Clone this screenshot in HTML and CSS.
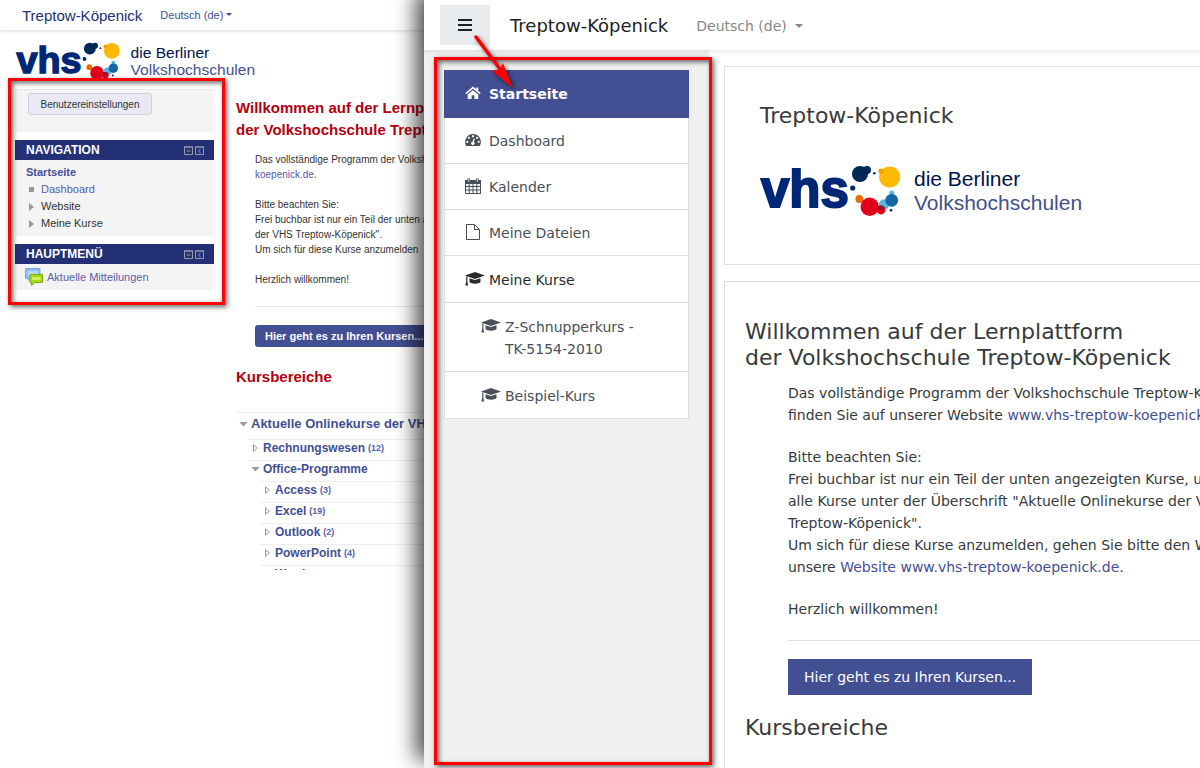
FILE: index.html
```html
<!DOCTYPE html>
<html lang="de">
<head>
    <meta charset="UTF-8">
    <meta name="viewport" content="width=device-width, initial-scale=1.0">
    <title>Treptow-Köpenick</title>
    <link rel="stylesheet" href="styles.css">
</head>
<body>
    <svg class="defs" width="0" height="0" aria-hidden="true">
        <symbol id="bubbles" viewBox="0 0 54 54">
            <g fill="#002855">
                <circle cx="10" cy="9" r="8"/>
                <circle cx="17" cy="5" r="4"/>
                <circle cx="24.3" cy="8.3" r="1.3"/>
                <circle cx="2.7" cy="23" r="2.6"/>
                <circle cx="41" cy="45.3" r="1.3"/>
            </g>
            <circle cx="39.7" cy="12" r="10.6" fill="#fdb900"/>
            <circle cx="31" cy="6" r="2.6" fill="#f0a000"/>
            <circle cx="9.3" cy="34" r="3.9" fill="#ee6a00"/>
            <circle cx="41.7" cy="27.9" r="2.5" fill="#5ab4e5"/>
            <circle cx="34" cy="39.5" r="5.2" fill="#5ab4e5"/>
            <circle cx="41.7" cy="35.3" r="6.4" fill="#1467a5"/>
            <circle cx="19.7" cy="41.7" r="9.2" fill="#e2001a"/>
            <circle cx="31" cy="45" r="4.4" fill="#e2001a"/>
            <path d="M27 42a5 5 0 0 1 8 1a5 5 0 0 1-6 1z" fill="#8c1730"/>
        </symbol>
        <symbol id="cap" viewBox="0 0 20 16">
            <path d="M10 1L0 4.500L10 8L20 4.500Z M4.500 7.200V11C6 13.300 14 13.300 15.500 11V7.200L10 9.100Z M1.200 5.500h1.200v5l.8 4H.4l.8-4z"/>
        </symbol>
        <symbol id="min" viewBox="0 0 9 9">
            <path d="M.5 1h8v7.500h-8zM0 1h9M2.500 5h4" fill="none" stroke="#99a"/>
        </symbol>
        <symbol id="dock" viewBox="0 0 9 9">
            <path d="M.5 1h8v7.500h-8zM0 1h9M5.500 3L3.500 5l2 2" fill="none" stroke="#99a"/>
        </symbol>
    </svg>

    <div class="windows">
        <div class="old">
            <header class="old-header">
                <a href="#" class="old-brand">Treptow-Köpenick</a>
                <a href="#" class="old-lang">Deutsch (de)<span class="caret"></span></a>
            </header>
            <div class="old-logo">
                <svg viewBox="0 0 326 54">
                    <text class="logo-vhs" x="1" y="42">vhs</text>
                    <use href="#bubbles" x="90" width="54" height="54"/>
                    <text class="logo-die" x="155" y="21">die Berliner</text>
                    <text class="logo-volk" x="155" y="45">Volkshochschulen</text>
                </svg>
            </div>
            <div class="old-body">
                <aside class="old-side">
                    <div class="block block-settings">
                        <button type="button">Benutzereinstellungen</button>
                    </div>
                    <div class="block">
                        <h2>NAVIGATION <span><svg><use href="#min"/></svg><svg><use href="#dock"/></svg></span></h2>
                        <ul class="old-nav">
                            <li><a href="#" class="current">Startseite</a></li>
                            <li class="square"><a href="#">Dashboard</a></li>
                            <li class="arrow">Website</li>
                            <li class="arrow">Meine Kurse</li>
                        </ul>
                    </div>
                    <div class="block">
                        <h2>HAUPTMENÜ <span><svg><use href="#min"/></svg><svg><use href="#dock"/></svg></span></h2>
                        <a href="#" class="news">
                            <svg viewBox="0 0 18 18">
                                <path d="M1 .5h14v10H5.500V14L2.500 10.500H.5V1z" fill="#8fc0f3" stroke="#6ea6e4"/>
                                <path d="M3 3h10v5H3z" fill="#b8d8fa"/>
                                <path d="M5 6.500h12.500v8H10L6.500 17.500v-3H5z" fill="#a4d822" stroke="#78b000"/>
                                <path d="M7 9h8.500v3H7z" fill="#cdf05a"/>
                            </svg>
                            Aktuelle Mitteilungen
                        </a>
                    </div>
                    <div class="frame frame-old"></div>
                </aside>

                <main class="old-main">
                    <h2>Willkommen auf der Lernplattform<br>der Volkshochschule Treptow-Köpenick</h2>
                    <div class="old-text">
                        <p>Das vollständige Programm der Volkshochschule<br><a href="#">koepenick.de</a>.</p>
                        <p>Bitte beachten Sie:<br>Frei buchbar ist nur ein Teil der unten angezeigten<br>der VHS Treptow-Köpenick".<br>Um sich für diese Kurse anzumelden</p>
                        <p>Herzlich willkommen!</p>
                        <hr>
                        <a href="#" class="old-btn">Hier geht es zu Ihren Kursen...</a>
                    </div>
                    <h2>Kursbereiche</h2>
                    <ul class="tree">
                        <li class="level1 open"><a href="#">Aktuelle Onlinekurse der VHS</a></li>
                        <li class="level2"><a href="#">Rechnungswesen</a> <small>(12)</small></li>
                        <li class="level2 open"><a href="#">Office-Programme</a></li>
                        <li class="level3"><a href="#">Access</a> <small>(3)</small></li>
                        <li class="level3"><a href="#">Excel</a> <small>(19)</small></li>
                        <li class="level3"><a href="#">Outlook</a> <small>(2)</small></li>
                        <li class="level3"><a href="#">PowerPoint</a> <small>(4)</small></li>
                        <li class="level3"><a href="#">Word</a></li>
                    </ul>
                </main>
            </div>
        </div>

        <div class="new">
            <header class="navbar">
                <button type="button" class="toggle" aria-label="Menü">
                    <svg viewBox="0 0 14 12"><path d="M0 1h14M0 6h14M0 11h14" stroke="#1d2125" stroke-width="2"/></svg>
                </button>
                <a href="#" class="brand">Treptow-Köpenick</a>
                <a href="#" class="lang">Deutsch (de)<span class="caret"></span></a>
            </header>
            <div class="page">
                <div class="drawer">
                    <nav class="menu">
                        <a href="#" class="active">
                            <svg viewBox="0 0 16 16"><path d="M8 5.200l5.300 4.400V14H9.400v-3.800H6.600V14H2.700V9.600z"/><path d="M.8 8.600L8 2.600l7.200 6" fill="none" stroke="currentColor" stroke-width="1.500"/><path d="M11.200 2.400h2v4l-2-1.700z"/></svg>
                            Startseite
                        </a>
                        <a href="#">
                            <svg viewBox="0 0 16 16"><path fill-rule="evenodd" d="M8 2a8 8 0 0 1 6.800 12H1.200A8 8 0 0 1 8 2zM8 3a1.100 1.100 0 1 0 .01 0zM3.900 4.700a1.100 1.100 0 1 0 .01 0zM12.100 4.700a1.100 1.100 0 1 0 .01 0zM2.300 8.700a1.100 1.100 0 1 0 .01 0zM13.700 8.700a1.100 1.100 0 1 0 .01 0zM8.800 6.200L7.700 9.600a1.700 1.700 0 1 0 1.200.3l1-3.400z"/></svg>
                            Dashboard
                        </a>
                        <a href="#">
                            <svg viewBox="0 0 16 16"><path fill-rule="evenodd" d="M0 2h2.500V.5h2.500V2h6V.5h2.500V2H16v14H0zM1 6v2h2.700V6zM4.700 6v2h2.800V6zM8.500 6v2h2.800V6zM12.300 6v2H15V6zM1 9v2.500h2.700V9zM4.700 9v2.500h2.800V9zM8.500 9v2.500h2.800V9zM12.300 9v2.500H15V9zM1 12.500V15h2.700v-2.500zM4.700 12.500V15h2.800v-2.500zM8.500 12.500V15h2.800v-2.500zM12.300 12.500V15H15v-2.500zM3.300 1.300v2.500h.9V1.300zM11.800 1.300v2.500h.9V1.300z"/></svg>
                            Kalender
                        </a>
                        <a href="#">
                            <svg viewBox="0 0 16 16"><path d="M1.500.5h8l5 5v10h-13zM9.500.5v5h5" fill="none" stroke="currentColor"/></svg>
                            Meine Dateien
                        </a>
                        <a href="#" class="parent"><svg class="cap"><use href="#cap"/></svg>Meine Kurse</a>
                        <a href="#" class="sub"><svg class="cap"><use href="#cap"/></svg>Z-Schnupperkurs -<br>TK-5154-2010</a>
                        <a href="#" class="sub"><svg class="cap"><use href="#cap"/></svg>Beispiel-Kurs</a>
                    </nav>
                    <div class="frame frame-new"></div>
                </div>

                <main class="content">
                    <section class="card card-head">
                        <h1>Treptow-Köpenick</h1>
                        <svg class="logo" viewBox="0 0 326 54">
                            <text class="logo-vhs" x="1" y="42">vhs</text>
                            <use href="#bubbles" x="90" width="54" height="54"/>
                            <text class="logo-die" x="154" y="21">die Berliner</text>
                            <text class="logo-volk" x="154" y="45">Volkshochschulen</text>
                        </svg>
                    </section>
                    <section class="card card-text">
                        <h2>Willkommen auf der Lernplattform<br>der Volkshochschule Treptow-Köpenick</h2>
                        <div class="text">
                            <p>Das vollständige Programm der Volkshochschule Treptow-Köpenick<br>finden Sie auf unserer Website <a href="#">www.vhs-treptow-koepenick.de</a>.</p>
                            <p>Bitte beachten Sie:<br>Frei buchbar ist nur ein Teil der unten angezeigten Kurse, und<br>alle Kurse unter der Überschrift "Aktuelle Onlinekurse der VHS<br>Treptow-Köpenick".<br>Um sich für diese Kurse anzumelden, gehen Sie bitte den Weg<br>unsere <a href="#">Website www.vhs-treptow-koepenick.de</a>.</p>
                            <p>Herzlich willkommen!</p>
                            <hr>
                            <a href="#" class="btn">Hier geht es zu Ihren Kursen...</a>
                        </div>
                        <h2>Kursbereiche</h2>
                    </section>
                </main>
            </div>
            <svg class="pointer" viewBox="0 0 50 60" aria-hidden="true">
                <path d="M6 6L30 38" stroke="#f00" stroke-width="3.500" stroke-linecap="round"/>
                <path d="M43 57L22 40L30 38L33 32Z" fill="#f00"/>
            </svg>
        </div>
    </div>
</body>
</html>
```
FILE: styles.css
```css
* {
    box-sizing: border-box;
}

body {
    margin: 0;
    font-family: "DejaVu Sans", Verdana, sans-serif;
    font-size: 14px;
    line-height: 22px;
    color: #373a3c;
    background: #fff;
}

a {
    color: #434f93;
    text-decoration: none;
}

h1, h2, p, ul {
    margin: 0;
    padding: 0;
    list-style: none;
}

button {
    font-family: inherit;
    cursor: pointer;
}

.defs {
    position: absolute;
}

.windows {
    display: grid;
    grid-template-columns: 424px minmax(0, 1fr);
    min-height: 100vh;
    overflow: hidden;
}

.caret {
    display: inline-block;
    margin-left: 8px;
    vertical-align: 3px;
    border: 4px solid transparent;
    border-top-color: currentColor;
    border-bottom: 0;
}

/* red markers */
.frame {
    position: absolute;
    border: 3px solid #f00;
    box-shadow: 2px 2px 5px rgba(0, 0, 0, 0.6), inset 2px 2px 5px rgba(0, 0, 0, 0.6);
    pointer-events: none;
}

.frame-old {
    inset: -11px -11px -15px -7px;
}

.frame-new {
    inset: 7px -3px 3px 10px;
}

.pointer {
    position: absolute;
    z-index: 2;
    left: 46px;
    top: 31px;
    width: 50px;
    height: 60px;
    fill: none;
    filter: drop-shadow(2px 2px 2px rgba(0, 0, 0, 0.6));
}

/* logo */
.logo-vhs {
    font: bold 51px "Liberation Sans", Arial, sans-serif;
    fill: #002776;
    stroke: #002776;
    stroke-width: 2px;
}

.logo-die,
.logo-volk {
    font: 21px "Liberation Sans", Arial, sans-serif;
    fill: #00124d;
}

.logo-volk {
    fill: #43508c;
}

/* old layout */
.old {
    max-height: 570px;
    overflow: hidden;
    white-space: nowrap;
    font-family: "Liberation Sans", Arial, sans-serif;
    font-size: 11px;
    line-height: 17px;
    color: #333;
}

.old a {
    color: #5560a8;
}

.old-header {
    display: flex;
    align-items: center;
    gap: 18px;
    height: 30px;
    padding-left: 22px;
    box-shadow: 0 1px 3px rgba(0, 0, 0, 0.16);
}

.old-header .old-brand {
    font-size: 15px;
    color: #222e75;
}

.old-header .old-lang {
    color: #434f93;
}

.old-header .caret {
    margin-left: 3px;
    border-width: 3px;
    border-bottom: 0;
}

.old-logo {
    height: 48px;
    padding: 12px 0 0 15px;
    overflow: hidden;
}

.old-logo svg {
    width: 243px;
    height: 40px;
}

.old-body {
    display: grid;
    grid-template-columns: 199px 1fr;
    gap: 22px;
    align-items: start;
    padding: 11px 0 0 15px;
}

.old-side {
    position: relative;
    display: grid;
    gap: 8px;
}

.block {
    background: #f4f4f4;
    border-radius: 3px;
}

.block-settings {
    height: 43px;
    padding: 3px 13px;
    border-top: 1px solid #e6e6e6;
}

.block-settings button {
    width: 124px;
    height: 22px;
    padding: 0;
    font-size: 10px;
    color: #333;
    background: #e8e9f3;
    border: 1px solid #cfd0e2;
    border-radius: 3px;
}

.block h2 {
    display: flex;
    justify-content: space-between;
    height: 20px;
    padding: 0 10px 0 11px;
    font-size: 12px;
    line-height: 20px;
    color: #fff;
    background: #243075;
}

.block h2 span {
    display: flex;
    gap: 2px;
    align-items: center;
}

.block h2 svg {
    width: 9px;
    height: 9px;
}

.old-nav {
    padding: 4px 11px;
}

.old-nav .current {
    font-weight: bold;
    color: #434f93;
}

.old-nav .square,
.old-nav .arrow {
    display: flex;
    align-items: center;
    gap: 7px;
    padding-left: 3px;
}

.square::before {
    content: "";
    width: 5px;
    height: 5px;
    background: #999;
}

.arrow::before {
    content: "";
    border: 4px solid transparent;
    border-left: 5px solid #999;
    border-right: 0;
}

.news {
    display: flex;
    align-items: center;
    gap: 4px;
    height: 26px;
    padding-left: 10px;
}

.news svg {
    width: 18px;
    height: 18px;
}

.old-main {
    padding-top: 8px;
}

.old-main h2 {
    font-size: 15px;
    line-height: 22px;
    color: #b5000f;
}

.old-text {
    padding: 11px 0 0 19px;
    font-size: 10px;
    line-height: 15px;
}

.old-text p {
    margin-bottom: 15px;
}

.old-text hr {
    margin: 19px 0 18px;
    border: 0;
    border-top: 1px solid #e6e6e6;
}

.old-text .old-btn {
    display: block;
    margin-bottom: 19px;
    padding: 0 10px;
    font-size: 11px;
    font-weight: bold;
    line-height: 22px;
    color: #fff;
    background: #434f93;
    border-radius: 3px;
}

.tree {
    padding-top: 24px;
    font-size: 12px;
    font-weight: bold;
    line-height: 16px;
}

.tree li {
    display: flex;
    align-items: center;
    gap: 3px;
    height: 21px;
    padding-bottom: 4px;
    border-top: 1px solid #eee;
}

.tree li::before {
    content: "";
    width: 5px;
    height: 8px;
    margin-right: 2px;
    background: #999;
    clip-path: polygon(0 0, 100% 50%, 0 100%, 0 0, 1px 2px, 1px 6px, 4px 50%, 1px 2px);
}

.tree .open::before {
    width: 9px;
    height: 5px;
    margin-left: -2px;
    margin-right: 0;
    clip-path: polygon(0 0, 100% 0, 50% 100%);
}

.tree a {
    color: #434f93;
}

.tree small {
    font-size: 9px;
    color: #5560a8;
}

.tree .level1 {
    height: 27px;
    padding-left: 5px;
    font-size: 13px;
}

.tree .level2 {
    margin-left: 12px;
    padding-left: 5px;
}

.tree .level3 {
    margin-left: 24px;
    padding-left: 5px;
}

/* new layout */
.new {
    position: relative;
    display: flex;
    flex-direction: column;
    background: #fff;
    box-shadow: -8px -8px 20px rgba(0, 0, 0, 0.7);
}

.navbar {
    position: relative;
    z-index: 1;
    display: flex;
    align-items: center;
    height: 50px;
    padding: 0 16px;
    background: #fff;
    box-shadow: 0 2px 4px rgba(0, 0, 0, 0.08);
}

.toggle {
    width: 50px;
    height: 40px;
    padding: 0;
    background: #e9ecef;
    border: 0;
}

.toggle svg {
    display: block;
    width: 14px;
    height: 12px;
    margin: 0 auto;
}

.brand {
    margin: 2px 28px 0 20px;
    font-size: 18px;
    color: #1d2125;
}

.lang {
    margin-top: 2px;
    color: #868686;
}

.page {
    flex: 1;
    display: grid;
    grid-template-columns: 285px minmax(0, 1fr);
}

.drawer {
    position: relative;
    padding: 20px 20px 0;
    background: #f0f0f0;
}

.menu a {
    display: block;
    padding: 12px 20px 11px 44px;
    color: #495057;
    background: #fff;
    border: 1px solid #dedede;
    border-top: 0;
}

.menu svg {
    float: left;
    width: 16px;
    height: 16px;
    margin: 2px 0 0 -24px;
    fill: currentColor;
}

.menu svg.cap {
    width: 20px;
}

.menu .active {
    padding-top: 13px;
    padding-bottom: 12px;
    font-weight: bold;
    color: #fff;
    background: #434f93;
    border-color: #434f93;
}

.menu .parent,
.menu .sub {
    padding-top: 13px;
}

.menu .parent {
    color: #292b2c;
}

.menu .sub {
    padding-left: 60px;
}

.content {
    display: flex;
    flex-direction: column;
    gap: 16px;
    padding: 16px 0 0 15px;
    white-space: nowrap;
    overflow: hidden;
}

.card {
    border: 1px solid #dedede;
    border-right: 0;
}

.card h1,
.card h2 {
    font-size: 22px;
    font-weight: normal;
    line-height: 26px;
}

.card-head {
    padding: 36px 36px 45px 35px;
}

.logo {
    display: block;
    width: 326px;
    height: 54px;
    margin-top: 36px;
}

.card-text {
    flex: 1;
    padding: 37px 0 0 20px;
    border-bottom: 0;
}

.text {
    padding: 11px 0 20px 43px;
}

.text p {
    margin-bottom: 20px;
}

.text hr {
    margin: 0 0 18px;
    border: 0;
    border-top: 1px solid #dedede;
}

.btn {
    display: inline-block;
    padding: 7px 16px;
    color: #fff;
    background: #434f93;
}
```
